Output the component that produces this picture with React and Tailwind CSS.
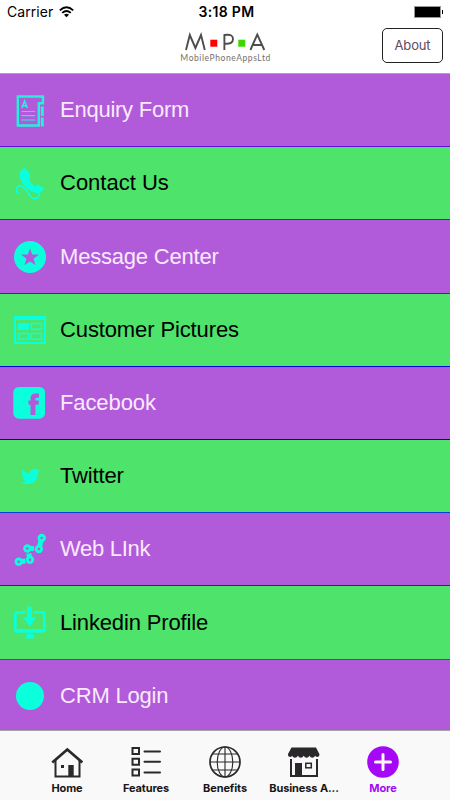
import { FaTwitter } from "react-icons/fa";

const CYAN = "#0cffdc";
const INK = "#2b282b";

function RowIcon({ top, children }) {
  return (
    <svg width="60" height="73" viewBox={`0 ${top} 60 73`} className="shrink-0" fill={CYAN}>
      {children}
    </svg>
  );
}

function FormIcon() {
  return (
    <RowIcon top={74}>
      <g stroke="#24f0dc" fill="none">
        <path d="M43 103V96.500H17.800V125.500H38.800V103.300H44" strokeWidth="2.400" />
        <path d="M42.300 106.500v9.500M42.300 117.500v9" strokeWidth="3" />
        <path d="M21.900 108l2.700-7 2.700 7M23 105.800h3.200" strokeWidth="1.700" />
        <path d="M21.500 111.500H35M21.500 115.700H35M21.500 120H35" strokeWidth="1.200" />
      </g>
    </RowIcon>
  );
}

function PhoneIcon() {
  return (
    <RowIcon top={147}>
      <path d="M24.200 167.800Q19 171 19.500 175.800 20.500 182.500 26 187.500 31 192 37.500 193.300 40 193 41.500 191.200L44.600 188.800 38.300 184.600 35 186.500Q31 184 28.800 179.300L30.200 176.500V173.800z" />
      <path d="M19.200 193.600C16.800 193.200 16.200 190.800 16.700 188.800 18 185 22.500 185.500 25 188.300 27.500 191 28.500 195 31.500 197.500 34.500 199.500 39.500 199 39.300 193" fill="none" stroke={CYAN} strokeWidth="2" />
    </RowIcon>
  );
}

function StarIcon() {
  return (
    <RowIcon top={220}>
      <circle cx="30" cy="257" r="16" />
      <path fill="#b15bda" d="M30 248.200l2.200 6.400h6.800l-5.400 4.100 2 6.600-5.600-3.900-5.600 3.900 2-6.600-5.400-4.100h6.800z" />
    </RowIcon>
  );
}

function GalleryIcon() {
  return (
    <RowIcon top={294}>
      <path fillRule="evenodd" d="M14 316h32v28H14zM16 320v22h28v-22z" />
      <path d="M18 323h11v7H18z" />
      <g fill="none" stroke={CYAN} strokeWidth="1.500">
        <rect x="31.200" y="323.500" width="10.300" height="5.700" />
        <rect x="18.500" y="333.500" width="10.300" height="5.700" />
        <rect x="31.200" y="333.500" width="10.300" height="5.700" />
      </g>
    </RowIcon>
  );
}

function FacebookIcon() {
  return (
    <RowIcon top={367}>
      <rect x="13.300" y="387" width="31.700" height="31.700" rx="5.500" />
      <path fill="#b15bda" d="M30.500 415v-10.300h-2v-4.200h2v-2c0-3.500 1.800-5 5-5H39v4.300h-2c-1.300 0-1.600.5-1.600 1.500v1.200H39l-.5 4.200h-3.100V415z" />
    </RowIcon>
  );
}

function TwitterIcon() {
  return (
    <div className="flex h-[73px] w-[60px] shrink-0 items-center justify-center">
      <FaTwitter className="size-[19px] text-[#0cffdc]" />
    </div>
  );
}

function ChainIcon() {
  return (
    <RowIcon top={513}>
      <g stroke={CYAN} strokeWidth="5">
        <path d="M41.500 538L39 549M27.500 548.500H34M28.800 553.500l1 6M19 561.700l6.500-.7" />
      </g>
      <g fill="#b15bda" stroke={CYAN} strokeWidth="2.900">
        <circle cx="41.700" cy="538" r="2.700" />
        <circle cx="38.900" cy="549" r="2.700" />
        <circle cx="27.300" cy="548.500" r="2.700" />
        <circle cx="30" cy="559.700" r="2.700" />
        <circle cx="18.700" cy="561.700" r="2.700" />
      </g>
    </RowIcon>
  );
}

function DownloadIcon() {
  return (
    <RowIcon top={587}>
      <path fill="none" stroke={CYAN} strokeWidth="2.800" d="M26 613.300H17.300q-2 0-2 2v15q0 2 2 2h25q2 0 2-2v-15q0-2-2-2H33.500" />
      <path d="M16 630h28v3H16zM27 609q0-1.800 2.500-1.800T32 609v9.500h4.500L29.700 627.500 23 618.500h4zM27 635h6l1.500 4.500H25.200z" />
    </RowIcon>
  );
}

function CircleIcon() {
  return (
    <RowIcon top={660}>
      <circle cx="30" cy="697" r="14" />
    </RowIcon>
  );
}

const rows = [
  { label: "Enquiry Form", Icon: FormIcon, tracking: "tracking-[-0.250px]", style: "h-[73px] border-b bg-[#b15bda] border-[#6010d8] text-[#f9eafd]" },
  { label: "Contact Us", Icon: PhoneIcon, tracking: "tracking-normal", style: "h-[73px] border-b bg-[#4ee36a] border-[#5219df] text-black" },
  { label: "Message Center", Icon: StarIcon, tracking: "tracking-[-0.200px]", style: "h-[74px] border-b bg-[#b15bda] border-[#2b23d5] text-[#f9eafd]" },
  { label: "Customer Pictures", Icon: GalleryIcon, tracking: "tracking-[-0.120px]", style: "h-[73px] border-b bg-[#4ee36a] border-[#0000dc] text-black" },
  { label: "Facebook", Icon: FacebookIcon, tracking: "tracking-[-0.100px]", style: "h-[73px] border-b bg-[#b15bda] border-[#0000dc] text-[#f9eafd]" },
  { label: "Twitter", Icon: TwitterIcon, tracking: "tracking-[-0.150px]", style: "h-[73px] border-b bg-[#4ee36a] border-[#0740dc] text-black" },
  { label: "Web LInk", Icon: ChainIcon, tracking: "tracking-[-0.300px]", style: "h-[73px] border-b bg-[#b15bda] border-[#5500cc] text-[#f9eafd]" },
  { label: "Linkedin Profile", Icon: DownloadIcon, tracking: "tracking-[-0.150px]", style: "h-[74px] border-b bg-[#4ee36a] border-[#3548c4] text-black" },
  { label: "CRM Login", Icon: CircleIcon, tracking: "tracking-[-0.200px]", style: "h-[70px] bg-[#b15bda] pt-px text-[#f9eafd]" },
];

function HomeIcon() {
  return (
    <svg width="32" height="32" viewBox="51 746 32 32" fill="none" stroke={INK}>
      <path d="M52.300 762.500L67.300 749.500 82.300 762.500" strokeWidth="2.700" />
      <path d="M55.500 760V776.500H79.500V760" strokeWidth="2" />
      <path fill={INK} stroke="none" d="M68.300 765h5.400v11h-5.400zM61 765h3v3h-3z" />
    </svg>
  );
}

function ListIcon() {
  return (
    <svg width="32" height="32" viewBox="130.500 746 32 32" fill="none" stroke={INK} strokeWidth="2">
      <path d="M133 748h6.500v6h-6.500zM133 758.700h6.500v6h-6.500zM133 769.400h6.500v6h-6.500z" />
      <path d="M145 751.500h15.500M145 761.700h15.500M145 772.400h15.500" strokeLinecap="round" />
    </svg>
  );
}

function GlobeIcon() {
  return (
    <svg width="32" height="32" viewBox="209 746 32 32" fill="none" stroke={INK}>
      <circle cx="225" cy="762" r="15" strokeWidth="1.700" />
      <ellipse cx="225" cy="762" rx="7.800" ry="15" strokeWidth="1.100" />
      <path d="M225 747v30M210 762h30M212.500 754h25M212.500 770h25" strokeWidth="1.100" />
    </svg>
  );
}

function StoreIcon() {
  return (
    <svg width="32" height="32" viewBox="288 746 32 32" fill={INK}>
      <path d="M291.500 747.500h24.500l3.500 6.800q0 2.500-2 2.700-1.600 0-2.300-1.300-1.100 2-2.900 2t-2.800-2q-1 2-2.900 2t-2.900-2q-1 2-2.900 2t-2.900-2q-1 2-2.900 2t-2.900-2q-.8 1.300-2 1.300-2.200 0-2.200-2.700z" />
      <path d="M290 759h2v16h24v-16h2v18h-28zM295 763h7v13h-7z" />
      <rect x="305.800" y="763.300" width="5.500" height="4.500" fill="none" stroke={INK} strokeWidth="1.500" />
    </svg>
  );
}

function MoreIcon() {
  return (
    <svg width="32" height="32" viewBox="0 0 32 32">
      <circle cx="16" cy="16" r="15.800" fill="#a408f5" />
      <path d="M16 8.500v15M8.500 16h15" stroke="#faf8fa" strokeWidth="3" strokeLinecap="round" />
    </svg>
  );
}

const tabs = [
  { label: "Home", Icon: HomeIcon, color: "text-[#171517]" },
  { label: "Features", Icon: ListIcon, color: "text-[#171517]" },
  { label: "Benefits", Icon: GlobeIcon, color: "text-[#171517]" },
  { label: "Business A...", Icon: StoreIcon, color: "text-[#171517]" },
  { label: "More", Icon: MoreIcon, color: "text-[#a408f5]" },
];

function StatusBar() {
  return (
    <div className="grid h-6 grid-cols-3 items-center font-[Inter,sans-serif] leading-6 text-black">
      <div className="flex items-center gap-[6px] pl-[7px]">
        <span className="text-[14px] tracking-[0.050px]">Carrier</span>
        <svg width="15" height="12" viewBox="0 0 15 12" fill="none" stroke="black" strokeWidth="1.800">
          <path d="M.8 4.300Q7.500-1.800 14.200 4.300M3.200 6.900q4.300-3.800 8.600 0" />
          <path d="M5 8.700q2.500-2 5 0L7.500 11.300z" fill="black" stroke="none" />
        </svg>
      </div>
      <span className="pl-[3px] text-center text-[14px] font-semibold tracking-[0.300px]">3:18 PM</span>
      <div className="flex items-center justify-end pr-[7px]">
        <div className="h-3 w-[27px] border border-[#999] bg-black" />
        <div className="ml-px h-1 w-px bg-black" />
      </div>
    </div>
  );
}

function Logo() {
  return (
    <svg width="94" height="36" viewBox="179 30 94 36">
      <g fill="none" stroke="#4d4d4d" strokeWidth="1.900">
        <path d="M186 50L189.800 35 195.400 48 201 35 204.800 50" />
        <path d="M224.400 50V35Q233 33.500 233 39 233 44.300 225 43.700" />
        <path d="M250.400 50L257.300 34.500 264.300 50M252.700 45h9.400" />
      </g>
      <rect x="210.300" y="39.700" width="7" height="7" fill="#f00" />
      <rect x="238.300" y="39.700" width="7" height="7" fill="#38d800" />
      <text x="180.300" y="61" textLength="90" fontSize="8.500" fill="#707070" fontFamily="Lato, sans-serif">MobilePhoneAppsLtd</text>
    </svg>
  );
}

export default function App() {
  return (
    <main className="flex h-[800px] w-[450px] flex-col overflow-hidden bg-white font-['Liberation_Sans',sans-serif]">
      <header className="h-[74px] shrink-0 border-b border-[#aaa3ad] bg-white">
        <StatusBar />
        <div className="grid h-[46px] grid-cols-[179px_94px_1fr] pr-[7px]">
          <span />
          <div className="pt-1.5">
            <Logo />
          </div>
          <button className="mt-1 h-[35px] w-[61px] justify-self-end rounded-[5px] border border-[#222] font-[Inter,sans-serif] text-[13px] tracking-[-0.150px] text-[#5c4a60]">
            About
          </button>
        </div>
      </header>
      <nav className="shrink-0">
        {rows.map(({ label, Icon, tracking, style }) => (
          <a key={label} className={`flex items-center overflow-hidden ${style}`}>
            <Icon />
            <span className={`whitespace-nowrap text-[22px] leading-none ${tracking}`}>{label}</span>
          </a>
        ))}
      </nav>
      <footer className="flex h-[70px] shrink-0 border-t border-[#a4a1a5] bg-[#f9f9f9] pl-[27px]">
        {tabs.map(({ label, Icon, color }) => (
          <a key={label} className={`flex w-[79px] shrink-0 flex-col items-center pt-[15px] ${color}`}>
            <Icon />
            <span className="mt-[3px] whitespace-nowrap pl-px font-[Inter,sans-serif] text-[11px] leading-[14px] font-bold tracking-[-0.100px]">{label}</span>
          </a>
        ))}
      </footer>
    </main>
  );
}
